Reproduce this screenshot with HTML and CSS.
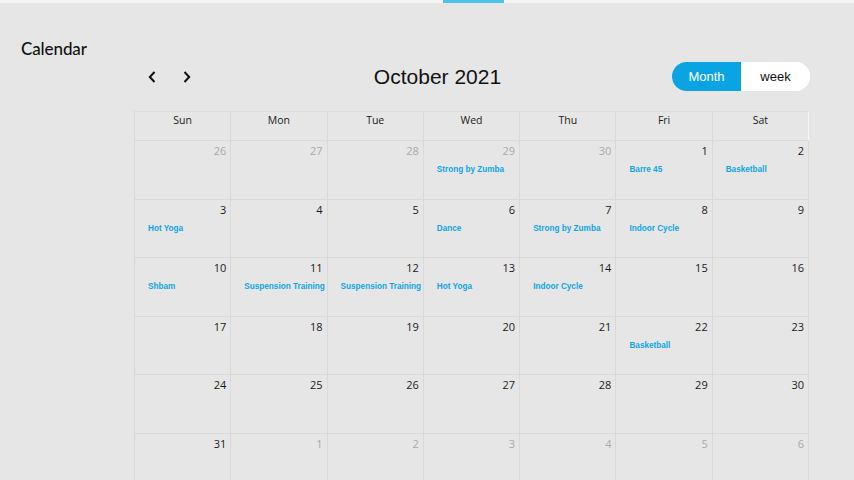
FILE: index.html
```html
<!DOCTYPE html>
<html lang="en">
<head>
<meta charset="utf-8">
<title>Calendar</title>
<link rel="stylesheet" href="styles.css">
</head>
<body>
<div class="topbar"><span class="tab-indicator"></span></div>
<div class="page">
  <aside class="sidebar">
    <h1 class="page-title">Calendar</h1>
  </aside>
  <main class="main">
    <div class="toolbar">
      <div class="nav">
        <button class="nav-btn" aria-label="Previous">
          <svg width="8" height="12" viewBox="0 0 8 12"><path d="M6.5 1 L1.8 6 L6.5 11" fill="none" stroke="#111" stroke-width="2"/></svg>
        </button>
        <button class="nav-btn" aria-label="Next">
          <svg width="8" height="12" viewBox="0 0 8 12"><path d="M1.5 1 L6.2 6 L1.5 11" fill="none" stroke="#111" stroke-width="2"/></svg>
        </button>
      </div>
      <h2 class="month-title">October 2021</h2>
      <div class="toggle">
        <button class="toggle-btn active">Month</button>
        <button class="toggle-btn">week</button>
      </div>
    </div>

    <div class="grid">
      <div class="head">Sun</div>
      <div class="head">Mon</div>
      <div class="head">Tue</div>
      <div class="head">Wed</div>
      <div class="head">Thu</div>
      <div class="head">Fri</div>
      <div class="head last">Sat</div>

      <div class="cell other"><span class="num">26</span></div>
      <div class="cell other"><span class="num">27</span></div>
      <div class="cell other"><span class="num">28</span></div>
      <div class="cell other"><span class="num">29</span><span class="event">Strong by Zumba</span></div>
      <div class="cell other"><span class="num">30</span></div>
      <div class="cell"><span class="num">1</span><span class="event">Barre 45</span></div>
      <div class="cell"><span class="num">2</span><span class="event">Basketball</span></div>

      <div class="cell"><span class="num">3</span><span class="event">Hot Yoga</span></div>
      <div class="cell"><span class="num">4</span></div>
      <div class="cell"><span class="num">5</span></div>
      <div class="cell"><span class="num">6</span><span class="event">Dance</span></div>
      <div class="cell"><span class="num">7</span><span class="event">Strong by Zumba</span></div>
      <div class="cell"><span class="num">8</span><span class="event">Indoor Cycle</span></div>
      <div class="cell"><span class="num">9</span></div>

      <div class="cell"><span class="num">10</span><span class="event">Shbam</span></div>
      <div class="cell"><span class="num">11</span><span class="event">Suspension Training</span></div>
      <div class="cell"><span class="num">12</span><span class="event">Suspension Training</span></div>
      <div class="cell"><span class="num">13</span><span class="event">Hot Yoga</span></div>
      <div class="cell"><span class="num">14</span><span class="event">Indoor Cycle</span></div>
      <div class="cell"><span class="num">15</span></div>
      <div class="cell"><span class="num">16</span></div>

      <div class="cell"><span class="num">17</span></div>
      <div class="cell"><span class="num">18</span></div>
      <div class="cell"><span class="num">19</span></div>
      <div class="cell"><span class="num">20</span></div>
      <div class="cell"><span class="num">21</span></div>
      <div class="cell"><span class="num">22</span><span class="event">Basketball</span></div>
      <div class="cell"><span class="num">23</span></div>

      <div class="cell"><span class="num">24</span></div>
      <div class="cell"><span class="num">25</span></div>
      <div class="cell"><span class="num">26</span></div>
      <div class="cell"><span class="num">27</span></div>
      <div class="cell"><span class="num">28</span></div>
      <div class="cell"><span class="num">29</span></div>
      <div class="cell"><span class="num">30</span></div>

      <div class="cell"><span class="num">31</span></div>
      <div class="cell other"><span class="num">1</span></div>
      <div class="cell other"><span class="num">2</span></div>
      <div class="cell other"><span class="num">3</span></div>
      <div class="cell other"><span class="num">4</span></div>
      <div class="cell other"><span class="num">5</span></div>
      <div class="cell other"><span class="num">6</span></div>
    </div>
  </main>
</div>
</body>
</html>
```

FILE: styles.css
```css
* { box-sizing: border-box; }

html, body {
  margin: 0;
  padding: 0;
  height: 100%;
  overflow: hidden;
}

body {
  background: #e6e6e6;
  font-family: "Open Sans", "Liberation Sans", sans-serif;
  color: #1a1a1a;
}

.topbar {
  height: 3px;
  background: #f4f4f4;
  display: flex;
  padding-left: 443px;
}

.tab-indicator {
  display: block;
  width: 61px;
  height: 3px;
  background: #4cc3ea;
}

.page {
  display: flex;
}

.sidebar {
  width: 134px;
  flex: none;
  padding: 35px 0 0 21px;
}

.page-title {
  margin: 0;
  font-family: "Lato", "Liberation Sans", sans-serif;
  font-size: 17px;
  font-weight: 500;
  color: #111;
  letter-spacing: -0.1px;
}

.main {
  width: 676px;
  flex: none;
}

.toolbar {
  display: flex;
  align-items: center;
  height: 29px;
  margin-top: 59px;
}

.nav {
  display: flex;
  gap: 11px;
  padding-left: 6px;
}

.nav-btn {
  width: 24px;
  height: 24px;
  padding: 0;
  border: 0;
  background: transparent;
  display: flex;
  align-items: center;
  justify-content: center;
}

.month-title {
  flex: 1;
  margin: 0;
  padding-left: 4px;
  text-align: center;
  font-family: "Liberation Sans", Arial, sans-serif;
  font-weight: 400;
  font-size: 21px;
  color: #111;
}

.toggle {
  display: flex;
  height: 29px;
  border-radius: 15px;
  overflow: hidden;
  background: #fff;
}

.toggle-btn {
  width: 69px;
  height: 29px;
  border: 0;
  padding: 0;
  background: #fff;
  color: #111;
  font-family: "Liberation Sans", Arial, sans-serif;
  font-size: 13px;
}

.toggle-btn.active {
  background: #0ba4e2;
  color: #fff;
}

.grid {
  margin-top: 20px;
  width: 675px;
  display: grid;
  grid-template-columns: repeat(7, minmax(0, 1fr));
  grid-template-rows: 29px repeat(6, 58.5px);
  border-left: 1px solid #d9d9d9;
  border-top: 1px solid #dedede;
}

.head {
  border-right: 1px solid #dadada;
  border-bottom: 1px solid #d9d9d9;
  text-align: center;
  font-size: 10.5px;
  padding-top: 1px;
  color: #1a1a1a;
}

.head.last {
  border-right-color: #f6f6f6;
}

.cell {
  border-right: 1px solid #d9d9d9;
  border-bottom: 1px solid #d9d9d9;
  display: flex;
  flex-direction: column;
  padding: 3px 4px 0 13px;
  min-width: 0;
}

.num {
  align-self: flex-end;
  font-size: 11px;
  line-height: 14px;
  color: #1a1a1a;
}

.cell.other .num {
  color: #a9a9a9;
}

.event {
  margin-top: 7px;
  font-family: "Liberation Sans", Arial, sans-serif;
  font-weight: 700;
  font-size: 8.2px;
  color: #0ea5e2;
  white-space: nowrap;
}
```
